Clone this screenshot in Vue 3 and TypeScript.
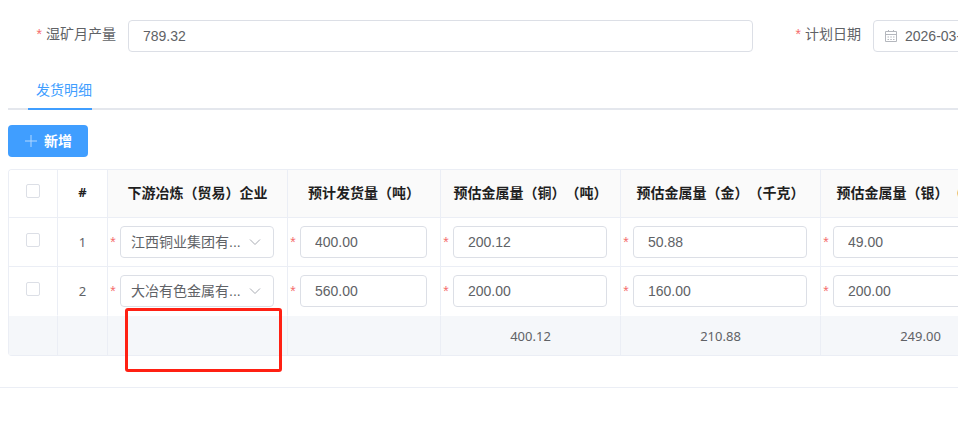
<script setup lang="ts">
import { computed, reactive, ref } from 'vue'

interface DetailRow {
  checked: boolean
  company: string
  values: string[]
}

const output = ref('789.32')
const planDate = ref('2026-03-01')
const allChecked = ref(false)

const columns: string[] = [
  '预计发货量（吨）',
  '预估金属量（铜）（吨）',
  '预估金属量（金）（千克）',
  '预估金属量（银）（千克）',
]
const companies: string[] = ['江西铜业集团有...', '大冶有色金属有...']

const rows = reactive<DetailRow[]>([
  { checked: false, company: companies[0], values: ['400.00', '200.12', '50.88', '49.00'] },
  { checked: false, company: companies[1], values: ['560.00', '200.00', '160.00', '200.00'] },
])

const totals = computed<string[]>(() =>
  columns.map((_, i) =>
    i === 0 ? '' : rows.reduce((sum, row) => sum + Number(row.values[i]), 0).toFixed(2),
  ),
)

function toggleAll() {
  rows.forEach((row) => (row.checked = allChecked.value))
}

function addRow() {
  rows.push({ checked: false, company: companies[0], values: ['0.00', '0.00', '0.00', '0.00'] })
}
</script>

<template>
  <main class="page">
    <form class="form" @submit.prevent>
      <div class="form-item">
        <label class="form-label" for="output"><span class="star">*</span>湿矿月产量</label>
        <input id="output" v-model="output" class="field" type="text" />
      </div>
      <div class="form-item">
        <label class="form-label" for="plan-date"><span class="star">*</span>计划日期</label>
        <div class="field date-field">
          <svg class="calendar" viewBox="0 0 14 14" aria-hidden="true">
            <path d="M1.500 2.500h11v10h-11zM1.500 5.500h11M4.500 1v2M9.500 1v2" />
            <path d="M3.500 8h1.500M6.300 8h1.500M9 8h1.500M3.500 10.500h1.500M6.300 10.500h1.500M9 10.500h1.500" />
          </svg>
          <input id="plan-date" v-model="planDate" class="bare" type="text" />
        </div>
      </div>
    </form>

    <nav class="tabs">
      <a class="tab" href="#detail">发货明细</a>
    </nav>

    <section id="detail" class="detail">
      <button class="add" type="button" @click="addRow">
        <svg class="plus" viewBox="0 0 14 14" aria-hidden="true"><path d="M7 1v12M1 7h12" /></svg>
        <span>新增</span>
      </button>

      <div class="table-box">
        <div class="table-clip">
          <table class="table">
            <colgroup>
              <col class="c-check" />
              <col class="c-index" />
              <col class="c-mid" />
              <col class="c-small" />
              <col class="c-mid" />
              <col class="c-wide" />
              <col class="c-wide" />
            </colgroup>
            <thead>
              <tr>
                <th class="plain check-cell">
                  <input v-model="allChecked" class="check" type="checkbox" aria-label="全选" @change="toggleAll" />
                </th>
                <th class="plain index">#</th>
                <th>下游冶炼（贸易）企业</th>
                <th v-for="name in columns" :key="name">{{ name }}</th>
              </tr>
            </thead>
            <tbody>
              <tr v-for="(row, r) in rows" :key="r">
                <td class="check-cell">
                  <input v-model="row.checked" class="check" type="checkbox" :aria-label="`选择第${r + 1}行`" />
                </td>
                <td class="number">{{ r + 1 }}</td>
                <td>
                  <div class="cell">
                    <span class="star">*</span>
                    <div class="select-box">
                      <select v-model="row.company" class="field select" aria-label="下游冶炼（贸易）企业">
                        <option v-for="c in companies" :key="c" :value="c">{{ c }}</option>
                      </select>
                      <svg class="chevron" viewBox="0 0 14 14" aria-hidden="true"><path d="M2 4.500l5 5 5-5" /></svg>
                    </div>
                  </div>
                </td>
                <td v-for="(name, i) in columns" :key="name">
                  <div class="cell">
                    <span class="star">*</span>
                    <input v-model="row.values[i]" class="field" type="text" :aria-label="name" />
                  </div>
                </td>
              </tr>
            </tbody>
            <tfoot>
              <tr>
                <td></td>
                <td></td>
                <td></td>
                <td v-for="(total, i) in totals" :key="i" class="number">{{ total }}</td>
              </tr>
            </tfoot>
          </table>
        </div>
        <div class="highlight"></div>
      </div>
    </section>
  </main>
</template>

<style>
body {
  background: #fff;
}
</style>

<style scoped>
.page,
.page * {
  box-sizing: border-box;
}
.page {
  overflow: hidden;
  padding-top: 20px;
  color: #606266;
  font-family: 'Liberation Sans', 'Noto Sans CJK SC', sans-serif;
  font-size: 14px;
  text-spacing-trim: space-all;
}
.form {
  display: grid;
  grid-template-columns: repeat(2, minmax(745px, 1fr));
  margin-left: 8px;
}
.form-item {
  display: flex;
}
.form-label {
  flex: 0 0 120px;
  height: 28px;
  padding-right: 12px;
  line-height: 28px;
  text-align: right;
}
.star {
  color: #f56c6c;
}
.form-label .star {
  margin-right: 4px;
}
.field {
  flex: 1;
  width: 100%;
  min-width: 0;
  height: 32px;
  margin: 0;
  padding: 0 14px;
  border: 1px solid #dcdfe6;
  border-radius: 4px;
  outline: 0;
  background: #fff;
  color: #606266;
  font: inherit;
}
.field:focus {
  border-color: #409eff;
}
.date-field {
  display: flex;
  align-items: center;
  gap: 7px;
  padding: 0 10px;
}
.bare {
  flex: 1;
  min-width: 0;
  padding: 0;
  border: 0;
  outline: 0;
  background: none;
  color: inherit;
  font: inherit;
}
.calendar,
.chevron,
.plus {
  width: 14px;
  height: 14px;
  fill: none;
  stroke: #a8abb2;
}
.calendar {
  flex: none;
  stroke: #b4b7bd;
}
.tabs {
  display: flex;
  height: 40px;
  margin: 18px 0 0 8px;
  padding-left: 20px;
  border-bottom: 2px solid #e4e7ed;
}
.tab {
  height: 40px;
  padding-left: 8px;
  border-bottom: 2px solid #409eff;
  color: #409eff;
  line-height: 40px;
  text-decoration: none;
}
.detail {
  padding: 15px 0 31px 8px;
  border-bottom: 1px solid #ebeef5;
}
.add {
  display: flex;
  align-items: center;
  gap: 6px;
  height: 32px;
  margin-bottom: 12px;
  padding: 0 16px;
  border: 0;
  border-radius: 4px;
  background: #409eff;
  color: #fff;
  font: inherit;
  font-weight: 700;
}
.add span {
  padding-bottom: 2px;
}
.plus {
  stroke: #b3d8ff;
}
.table-box {
  position: relative;
}
.table-clip {
  overflow: hidden;
  border-top: 1px solid #ebeef5;
  border-left: 1px solid #ebeef5;
  border-radius: 4px 0 0 4px;
}
.table {
  width: 1012px;
  min-width: 100%;
  border-collapse: separate;
  border-spacing: 0;
  table-layout: fixed;
}
.c-check {
  width: 49px;
}
.c-index {
  width: 50px;
}
.c-mid {
  width: 180px;
}
.c-small {
  width: 153px;
}
.c-wide {
  width: 200px;
}
th,
td {
  height: 49px;
  padding: 0;
  border-right: 1px solid #ebeef5;
  border-bottom: 1px solid #ebeef5;
  text-align: center;
  white-space: nowrap;
}
th {
  height: 48px;
  padding-bottom: 3px;
  background: #fafafa;
  color: #1f1f1f;
  font-weight: 700;
}
.plain {
  background: #fff;
}
.index,
.number {
  font-family: 'Noto Sans', sans-serif;
  font-size: 13px;
}
tbody tr:last-child td {
  border-bottom-color: #fff;
}
tfoot td {
  height: 40px;
  background: #f5f7fa;
}
.check-cell {
  padding-bottom: 4px;
}
th.check-cell {
  padding-bottom: 6px;
}
.check {
  display: block;
  width: 14px;
  height: 14px;
  margin: 0 auto;
  border: 1px solid #dcdfe6;
  border-radius: 2px;
  background: #fff;
  appearance: none;
}
.check:checked {
  border-color: #409eff;
  background: #409eff;
}
.cell {
  display: flex;
  align-items: center;
  padding-right: 13px;
}
.cell .star {
  flex: 0 0 12px;
  padding-right: 2px;
}
.select-box {
  display: flex;
  position: relative;
  flex: 1;
  min-width: 0;
}
.select {
  padding: 0 24px 0 10px;
  appearance: none;
}
.chevron {
  position: absolute;
  top: 9px;
  right: 12px;
  pointer-events: none;
}
.highlight {
  position: absolute;
  bottom: -16px;
  left: 117px;
  width: 157px;
  height: 64px;
  border: 3px solid #ff2013;
  border-radius: 3px;
  pointer-events: none;
}
</style>
